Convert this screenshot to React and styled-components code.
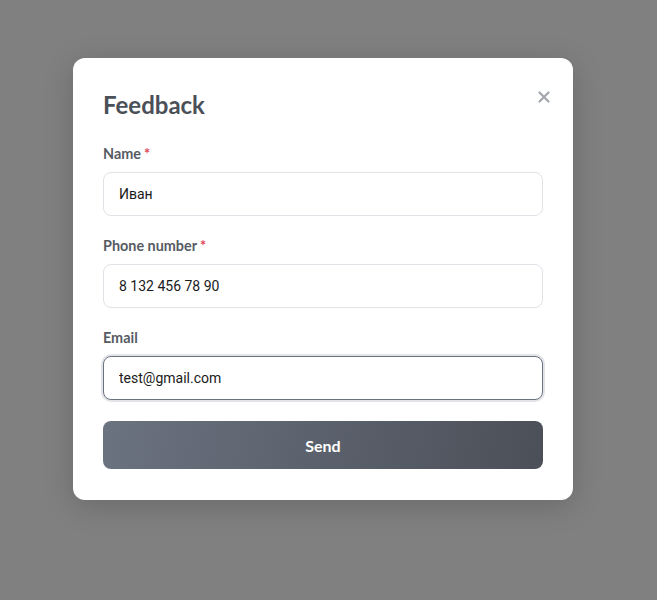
import React, { useState } from "react";
import styled, { createGlobalStyle } from "styled-components";

const GlobalStyle = createGlobalStyle`
  html, body {
    margin: 0;
    padding: 0;
    background: #808080;
    font-family: "Lato", "Liberation Sans", sans-serif;
  }
  * {
    box-sizing: border-box;
  }
`;

const Overlay = styled.div`
  min-height: 100vh;
  background-color: #808080;
  padding: 58px 0 0 73px;
`;

const Modal = styled.form`
  position: relative;
  width: 500px;
  background-color: #ffffff;
  border-radius: 12px;
  padding: 30px 30px 31px;
  box-shadow: 0 6px 30px rgba(0, 0, 0, 0.18);
`;

const Title = styled.h2`
  margin: 2px 0 24px;
  font-size: 24px;
  line-height: 30px;
  font-weight: 700;
  color: #4b5058;
`;

const CloseButton = styled.button`
  position: absolute;
  top: 31px;
  right: 21px;
  width: 16px;
  height: 16px;
  padding: 0;
  border: none;
  background: transparent;
  cursor: pointer;
  display: flex;
  align-items: center;
  justify-content: center;
`;

const Field = styled.div`
  display: flex;
  flex-direction: column;
  margin-bottom: 20px;
`;

const Label = styled.label`
  font-size: 14.4px;
  line-height: 20px;
  font-weight: 700;
  color: #565b63;
  margin-bottom: 8px;
`;

const Required = styled.span`
  color: #e0475a;
  margin-left: 3px;
`;

const Input = styled.input`
  width: 100%;
  height: 44px;
  padding: 0 15px;
  border-radius: 8px;
  border: 1px solid ${(p) => (p.$focused ? "#6b7280" : "#e1e1e8")};
  box-shadow: ${(p) => (p.$focused ? "0 0 0 2px #e3e4e7" : "none")};
  font-family: "Roboto", "Noto Sans", sans-serif;
  font-size: 14px;
  color: #1a1a1a;
  outline: none;
  background: #ffffff;
`;

const SendButton = styled.button`
  width: 100%;
  height: 48px;
  margin-top: 1px;
  border: none;
  border-radius: 8px;
  background: linear-gradient(100deg, #6b7280 0%, #4b5058 100%);
  color: #ffffff;
  font-family: "Lato", "Liberation Sans", sans-serif;
  font-size: 16px;
  font-weight: 700;
  cursor: pointer;
`;

const fields = [
  { id: "name", label: "Name", required: true, value: "Иван" },
  { id: "phone", label: "Phone number", required: true, value: "8 132 456 78 90" },
  { id: "email", label: "Email", required: false, value: "test@gmail.com", focused: true },
];

const CloseIcon = () => (
  <svg width="12" height="12" viewBox="0 0 12 12">
    <path
      d="M1.5 1.5 L10.5 10.5 M10.5 1.5 L1.5 10.5"
      stroke="#a3a7ae"
      strokeWidth="2.2"
      strokeLinecap="round"
    />
  </svg>
);

const App = () => {
  const [values, setValues] = useState(
    Object.fromEntries(fields.map((f) => [f.id, f.value]))
  );

  return (
    <>
      <GlobalStyle />
      <Overlay>
        <Modal onSubmit={(e) => e.preventDefault()}>
          <CloseButton type="button" aria-label="Close">
            <CloseIcon />
          </CloseButton>
          <Title>Feedback</Title>
          {fields.map((f) => (
            <Field key={f.id}>
              <Label htmlFor={f.id}>
                {f.label}
                {f.required && <Required>*</Required>}
              </Label>
              <Input
                id={f.id}
                $focused={f.focused}
                value={values[f.id]}
                onChange={(e) => setValues({ ...values, [f.id]: e.target.value })}
              />
            </Field>
          ))}
          <SendButton type="submit">Send</SendButton>
        </Modal>
      </Overlay>
    </>
  );
};

export default App;
